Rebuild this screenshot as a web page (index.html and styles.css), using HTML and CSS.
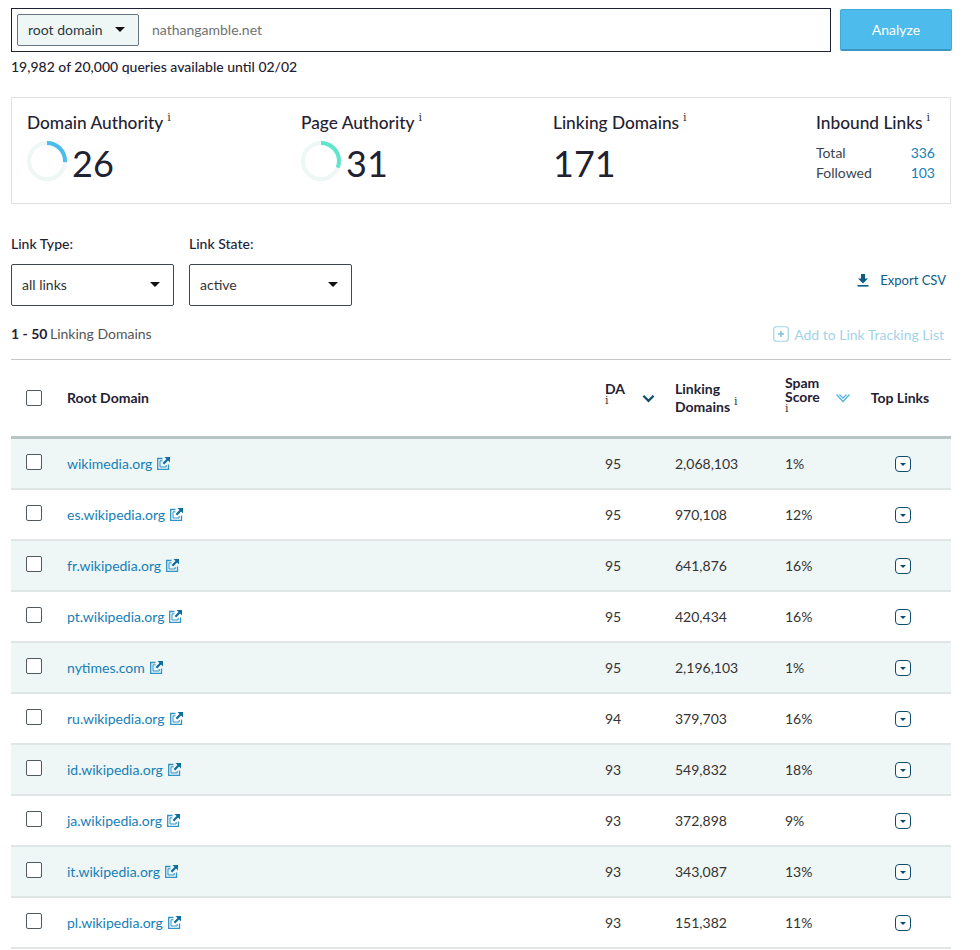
FILE: index.html
```html
<!DOCTYPE html>
<html lang="en">
<head>
    <meta charset="UTF-8">
    <meta name="viewport" content="width=device-width, initial-scale=1.0">
    <title>Linking Domains</title>
    <link rel="stylesheet" href="styles.css">
</head>
<body>

    <div class="search-row">
        <div class="search-box">
            <div class="scope-select">root domain <span class="caret"></span></div>
            <span class="search-value">nathangamble.net</span>
        </div>
        <button class="analyze-btn">Analyze</button>
    </div>
    <p class="quota">19,982 of 20,000 queries available until 02/02</p>

    <!-- Metrics -->
    <div class="metrics">
        <div class="metric metric-da">
            <h3>Domain Authority<sup class="info">i</sup></h3>
            <div class="metric-value">
                <svg class="ring" viewBox="0 0 40 40">
                    <circle cx="20" cy="20" r="18" class="ring-bg"/>
                    <circle cx="20" cy="20" r="18" class="ring-da" pathLength="100" stroke-dasharray="26 74" transform="rotate(-90 20 20)"/>
                </svg>
                <span>26</span>
            </div>
        </div>
        <div class="metric metric-pa">
            <h3>Page Authority<sup class="info">i</sup></h3>
            <div class="metric-value">
                <svg class="ring" viewBox="0 0 40 40">
                    <circle cx="20" cy="20" r="18" class="ring-bg"/>
                    <circle cx="20" cy="20" r="18" class="ring-pa" pathLength="100" stroke-dasharray="31 69" transform="rotate(-90 20 20)"/>
                </svg>
                <span>31</span>
            </div>
        </div>
        <div class="metric metric-ld">
            <h3>Linking Domains<sup class="info">i</sup></h3>
            <div class="metric-value"><span>171</span></div>
        </div>
        <div class="metric metric-il">
            <h3>Inbound Links<sup class="info">i</sup></h3>
            <div class="inbound-row"><span>Total</span><a href="#">336</a></div>
            <div class="inbound-row"><span>Followed</span><a href="#">103</a></div>
        </div>
    </div>

    <!-- Filters -->
    <div class="filters">
        <div class="filter">
            <label>Link Type:</label>
            <div class="filter-select">all links <span class="caret"></span></div>
        </div>
        <div class="filter">
            <label>Link State:</label>
            <div class="filter-select">active <span class="caret"></span></div>
        </div>
        <a href="#" class="export">
            <svg viewBox="0 0 12 13" width="12" height="13">
                <path d="M4 0h4v4.500h3L6 9.500 1 4.500h3z" fill="#0d5c85"/>
                <rect x="0.500" y="11" width="11" height="1.600" fill="#0d5c85"/>
            </svg>
            Export CSV
        </a>
    </div>

    <div class="list-bar">
        <div class="list-count"><b>1 - 50</b> Linking Domains</div>
        <div class="track-link">
            <svg viewBox="0 0 16 16" width="16" height="16">
                <rect x="0.750" y="0.750" width="14.500" height="14.500" rx="2.500" fill="none" stroke="#a3d3e8" stroke-width="1.200"/>
                <path d="M8 5v6M5 8h6" stroke="#7cc0de" stroke-width="1.500"/>
            </svg>
            Add to Link Tracking List
        </div>
    </div>

    <table class="domains">
        <thead>
            <tr>
                <th class="col-check"><span class="checkbox"></span></th>
                <th class="col-domain">Root Domain</th>
                <th class="col-da">
                    <div class="sort-head">
                        <div class="sort-label">DA<span class="info info-block">i</span></div>
                        <svg viewBox="0 0 14 9" width="13" height="9"><path d="M1.500 1.500 7 7l5.500-5.500" fill="none" stroke="#0f4c6b" stroke-width="2.400"/></svg>
                    </div>
                </th>
                <th class="col-links">Linking<br>Domains<sup class="info">i</sup></th>
                <th class="col-spam">
                    <div class="sort-head">
                        <div class="sort-label">Spam<br>Score<span class="info info-block">i</span></div>
                        <svg viewBox="0 0 14 10" width="14" height="10"><path d="M0.500 1.500 7 8.500l6.500-7M3.500 1.500 7 5.200l3.500-3.700" fill="none" stroke="#4fb0dc" stroke-width="1.200"/></svg>
                    </div>
                </th>
                <th class="col-top">Top Links</th>
            </tr>
        </thead>
        <tbody id="rows"></tbody>
    </table>

    <script>
        // Table data: domain, DA, linking domains, spam score
        const rows = [
            ['wikimedia.org', 95, '2,068,103', '1%'],
            ['es.wikipedia.org', 95, '970,108', '12%'],
            ['fr.wikipedia.org', 95, '641,876', '16%'],
            ['pt.wikipedia.org', 95, '420,434', '16%'],
            ['nytimes.com', 95, '2,196,103', '1%'],
            ['ru.wikipedia.org', 94, '379,703', '16%'],
            ['id.wikipedia.org', 93, '549,832', '18%'],
            ['ja.wikipedia.org', 93, '372,898', '9%'],
            ['it.wikipedia.org', 93, '343,087', '13%'],
            ['pl.wikipedia.org', 93, '151,382', '11%']
        ];

        const externalIcon = `<svg class="ext" viewBox="0 0 13 13" width="13" height="13">
            <path d="M5.500 1.500H0.700v10.800h10.800V7.500" fill="none" stroke="#2f93c7" stroke-width="1.300"/>
            <path d="M5.500 3.800H3v6.200h6.200V8" fill="none" stroke="#2f93c7" stroke-width="1"/>
            <path d="M7.500 0h5.500v5.500l-1.900-1.900-3.900 3.900-1.600-1.600 3.900-3.900z" fill="#0f6d9e"/>
        </svg>`;

        const dropIcon = `<span class="drop-btn"><span class="drop-caret"></span></span>`;

        document.getElementById('rows').innerHTML = rows.map(r => `
            <tr>
                <td class="col-check"><span class="checkbox"></span></td>
                <td class="col-domain"><a href="#">${r[0]}</a>${externalIcon}</td>
                <td class="col-da">${r[1]}</td>
                <td class="col-links">${r[2]}</td>
                <td class="col-spam">${r[3]}</td>
                <td class="col-top">${dropIcon}</td>
            </tr>`).join('');
    </script>

</body>
</html>
```

FILE: styles.css
```css
body {
    font-family: Lato, 'Liberation Sans', sans-serif;
    font-size: 14px;
    color: #1f2233;
    margin: 0;
    padding: 8px 29px 0 11px;
    background: white;
}

.search-row {
    display: flex;
    justify-content: space-between;
    align-items: center;
}

.search-box {
    width: 820px;
    height: 44px;
    box-sizing: border-box;
    border: 1px solid #1f2233;
    display: flex;
    align-items: center;
    padding-left: 5px;
}

.scope-select {
    width: 122px;
    height: 32px;
    box-sizing: border-box;
    background-color: #eff6f6;
    border: 1px solid #66757f;
    border-radius: 2px;
    display: flex;
    align-items: center;
    justify-content: space-between;
    padding: 0 13px 2px 10px;
    color: #2b3a42;
}

.search-value {
    margin-left: 13px;
    padding-bottom: 2px;
    color: #6f7273;
}

.caret {
    width: 0;
    height: 0;
    border-left: 5px solid transparent;
    border-right: 5px solid transparent;
    border-top: 5px solid #111;
}

.analyze-btn {
    width: 112px;
    height: 42px;
    margin-right: -1px;
    background-color: #4dbbeb;
    border: 1px solid #45a9d6;
    border-bottom: 2px solid #3a96c2;
    border-radius: 2px;
    color: white;
    font-family: inherit;
    font-size: 14px;
}

.quota {
    margin: 6px 0 0;
    font-size: 14px;
    font-weight: 500;
    line-height: 17px;
    padding-bottom: 1px;
}

.metrics {
    margin-top: 21px;
    height: 107px;
    box-sizing: border-box;
    border: 1px solid #dfe2e2;
    display: grid;
    grid-template-columns: 274px 252px 263px 1fr;
    padding: 14px 15px 0;
}

.metric h3 {
    margin: 0;
    font-size: 17.3px;
    font-weight: 500;
    line-height: 22px;
}

.info {
    font-family: 'DejaVu Serif', serif;
    font-size: 11px;
    font-weight: 400;
    color: #333;
}

sup.info {
    margin-left: 4px;
    position: relative;
    top: -1px;
    vertical-align: super;
    line-height: 0;
}

.info-block {
    display: block;
    line-height: 10px;
}

.metric-value {
    display: flex;
    align-items: center;
    gap: 5px;
    font-size: 36px;
    line-height: 40px;
    margin-top: 7px;
    height: 40px;
}

.metric-value span {
    padding-top: 3px;
}

.ring {
    width: 40px;
    height: 40px;
}

.ring circle {
    fill: none;
    stroke-width: 4;
}

.ring-bg {
    stroke: #eff6f6;
}

.ring-da {
    stroke: #4dbbeb;
}

.ring-pa {
    stroke: #5ee6cd;
}

.inbound-row {
    display: flex;
    justify-content: space-between;
    line-height: 20px;
    color: #3a4550;
}

.metric-il h3 {
    margin-bottom: 9px;
}

.inbound-row a {
    color: #1580b8;
    text-decoration: none;
}

.filters {
    display: flex;
    margin-top: 31px;
    gap: 15px;
}

.filter label {
    display: block;
    font-size: 14px;
    font-weight: 500;
    line-height: 17px;
    margin-bottom: 12px;
}

.filter-select {
    width: 163px;
    height: 42px;
    box-sizing: border-box;
    border: 1px solid #40474c;
    border-radius: 2px;
    display: flex;
    align-items: center;
    justify-content: space-between;
    padding: 0 13px 2px 10px;
    color: #333;
}

.export {
    margin-left: auto;
    margin-right: 5px;
    align-self: flex-end;
    margin-bottom: 18px;
    display: flex;
    align-items: center;
    gap: 11px;
    font-size: 13px;
    color: #0d5c85;
    text-decoration: none;
}

.list-bar {
    display: flex;
    justify-content: space-between;
    align-items: center;
    margin-top: 17px;
    height: 20px;
}

.list-count {
    color: #555;
}

.list-count b {
    color: #1f2233;
    margin-right: -1px;
}

.track-link {
    display: flex;
    align-items: center;
    gap: 5px;
    color: #a3d3e8;
    margin-right: 7px;
    padding-top: 2px;
}

.domains {
    width: 100%;
    margin-top: 16px;
    border-collapse: collapse;
    table-layout: fixed;
    border-top: 1px solid #c4c8c8;
}

.domains th {
    height: 76px;
    padding: 0;
    text-align: left;
    font-size: 14px;
    font-weight: 700;
    line-height: 18px;
    border-bottom: 3px solid #b9c4c4;
}

.domains td {
    height: 48px;
    padding: 0 0 1px;
    border-bottom: 2px solid #e0e5e5;
    color: #333;
}

.domains tbody tr:nth-child(odd) {
    background-color: #eff6f6;
}

.domains .col-check {
    width: 41px;
    padding-left: 15px;
}

.col-da {
    width: 70px;
}

.col-links {
    width: 110px;
}

.col-spam {
    width: 67px;
}

.domains th.col-top {
    width: 96px;
    text-align: center;
    padding-right: 3px;
}

.domains td.col-top {
    text-align: center;
    padding-left: 2px;
}

.checkbox {
    display: block;
    width: 16px;
    height: 16px;
    box-sizing: border-box;
    border: 1px solid #50595e;
    border-radius: 2px;
    background: white;
}

td .checkbox {
    margin-bottom: 2px;
}

.col-domain a {
    color: #1580b8;
    text-decoration: none;
}

.ext {
    margin-left: 5px;
    vertical-align: -1px;
}

.sort-head {
    display: flex;
    align-items: center;
    justify-content: space-between;
    padding-right: 20px;
}

.col-spam .sort-head {
    padding-right: 2px;
}

.sort-label {
    line-height: 14px;
    padding-bottom: 8px;
}

.col-spam .sort-label {
    padding-bottom: 6px;
}

.drop-btn {
    display: inline-flex;
    align-items: center;
    justify-content: center;
    width: 16px;
    height: 16px;
    box-sizing: border-box;
    border: 1.5px solid #0f4c6b;
    border-radius: 4px;
    vertical-align: middle;
    background: white;
}

.drop-caret {
    width: 0;
    height: 0;
    border-left: 3px solid transparent;
    border-right: 3px solid transparent;
    border-top: 3px solid #0f4c6b;
}
```
